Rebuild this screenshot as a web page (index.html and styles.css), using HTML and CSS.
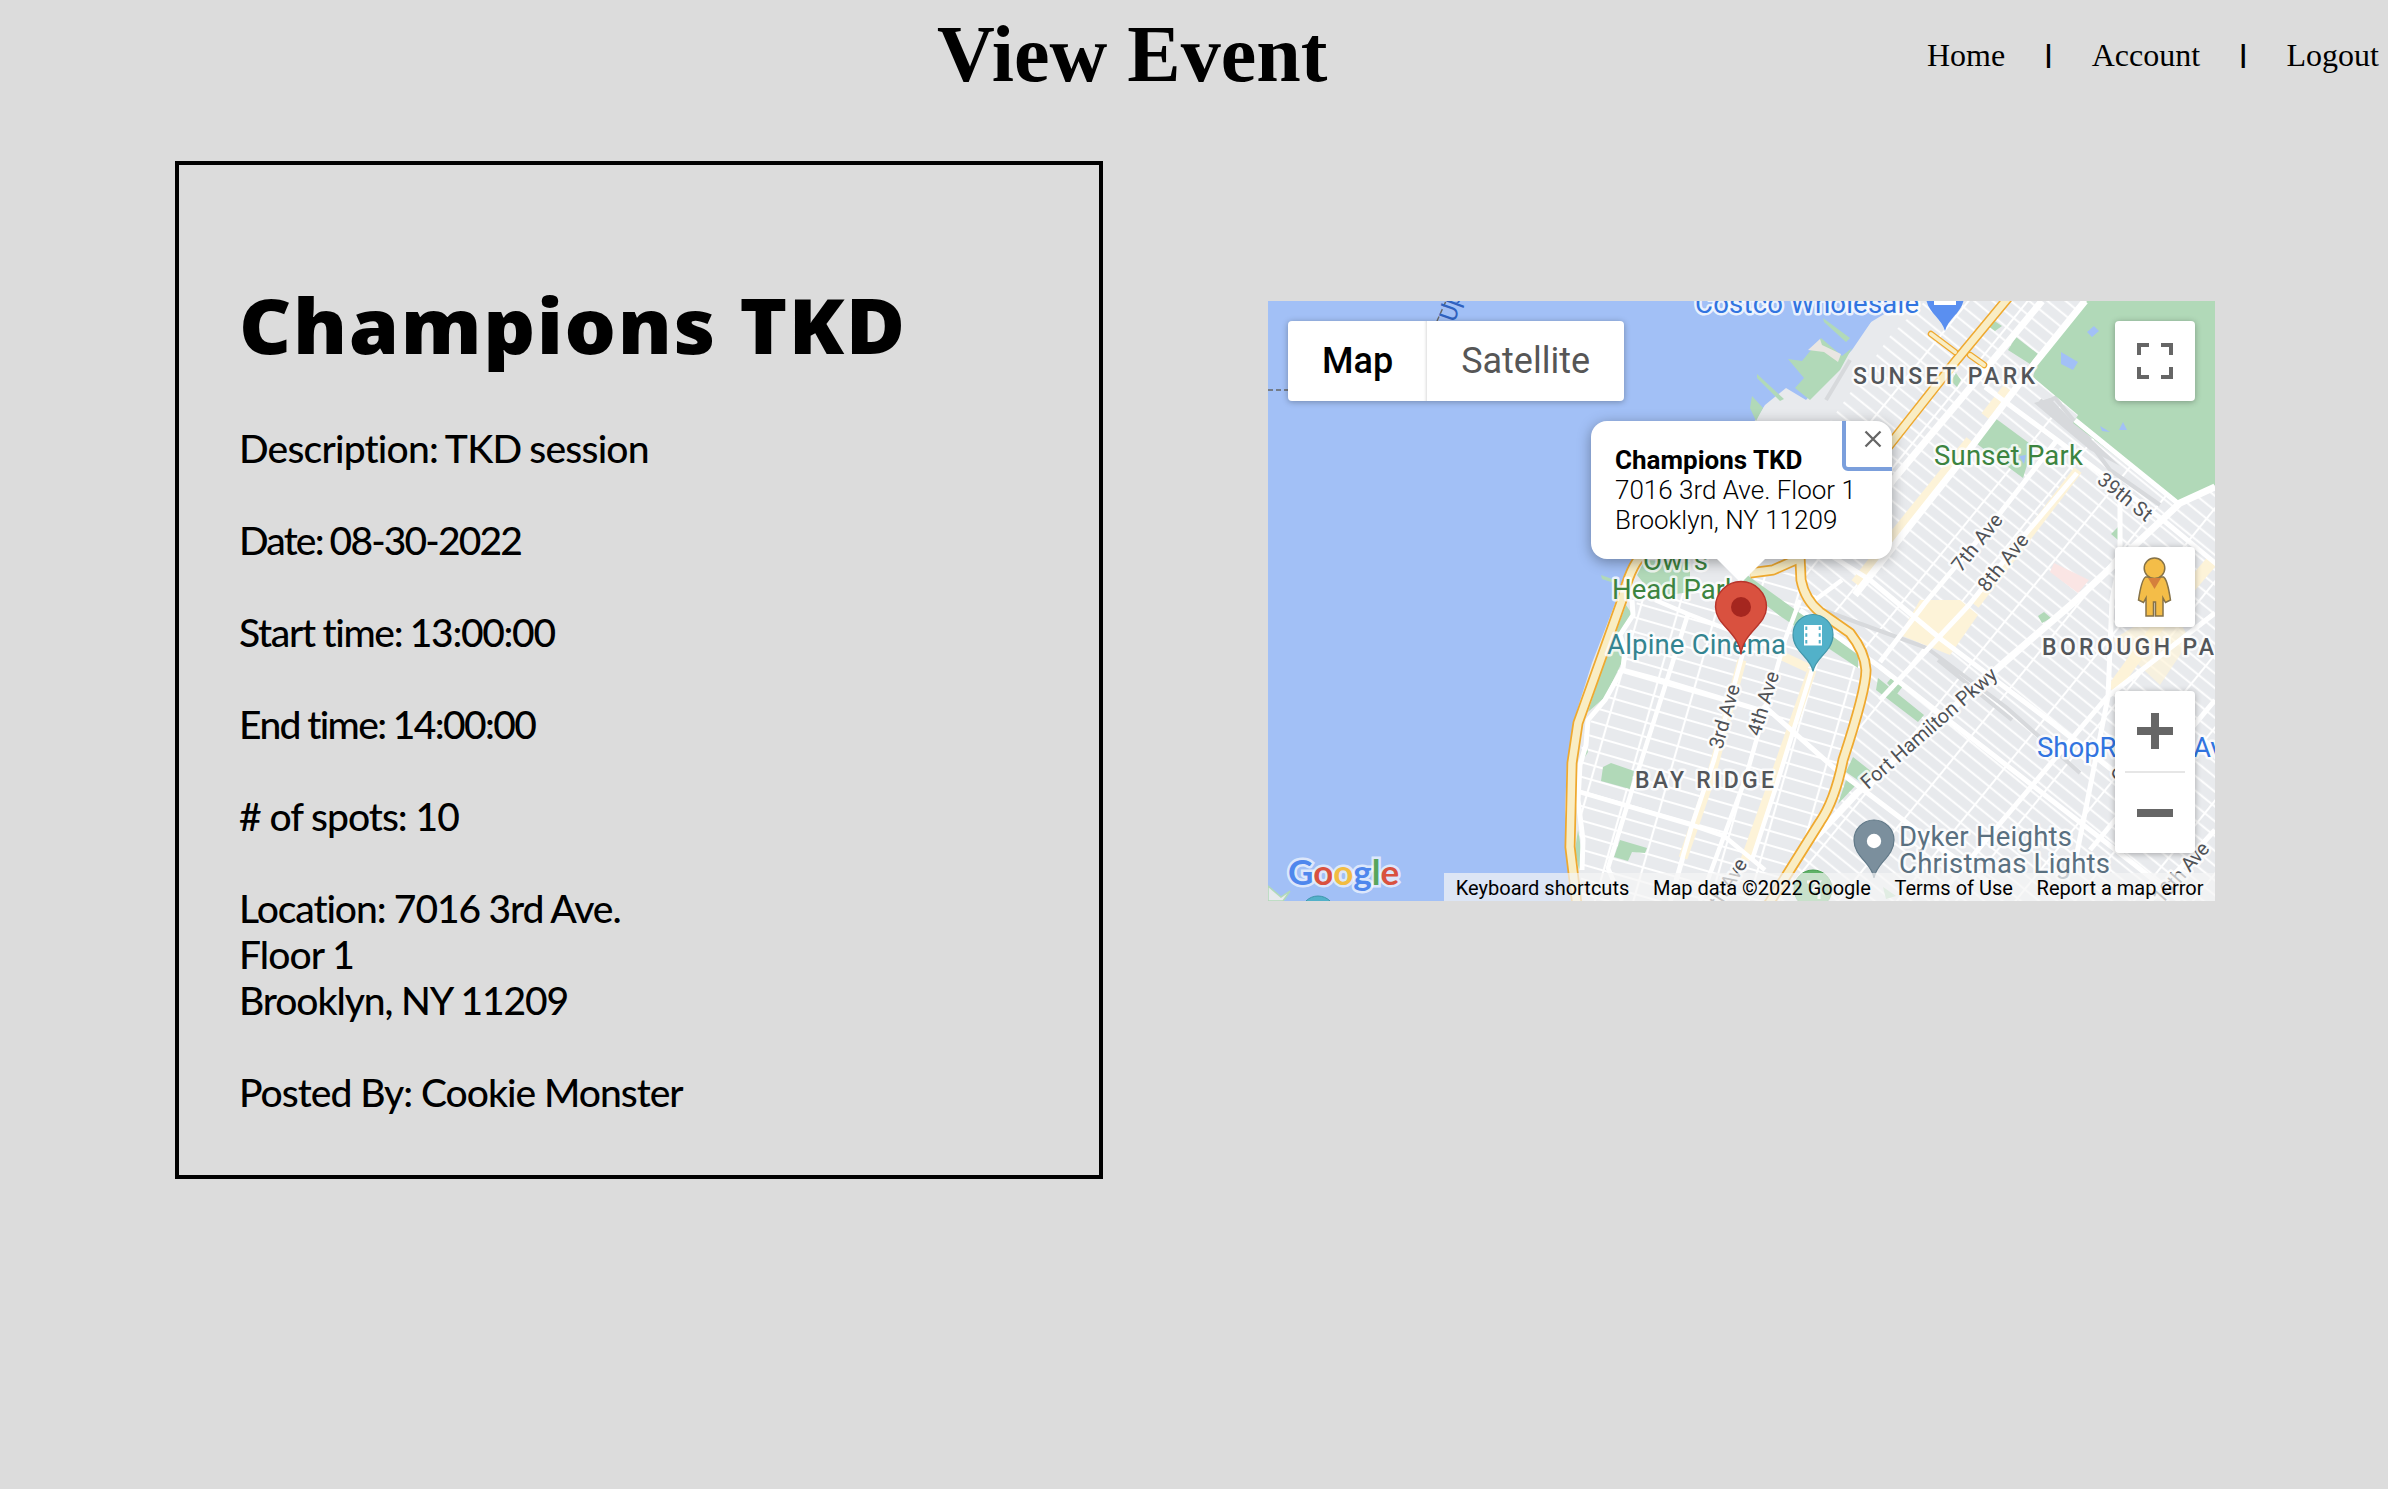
FILE: index.html
```html
<!DOCTYPE html>
<html lang="en">
<head>
<meta charset="utf-8">
<title>View Event</title>
<link rel="stylesheet" href="styles.css">
</head>
<body>
<header class="topbar">
  <h1 class="page-title">View Event</h1>
  <nav class="nav">
    <a class="nav-link">Home</a><span class="nav-sep">I</span><a class="nav-link">Account</a><span class="nav-sep">I</span><a class="nav-link">Logout</a>
  </nav>
</header>
<main class="content">
  <section class="card">
    <h2 class="event-name"><span>Champions TKD</span></h2>
    <p class="line"><span class="t-desc">Description: TKD session</span></p>
    <p class="line"><span class="t-date">Date: 08-30-2022</span></p>
    <p class="line"><span class="t-start">Start time: 13:00:00</span></p>
    <p class="line"><span class="t-end">End time: 14:00:00</span></p>
    <p class="line"><span class="t-spots"># of spots: 10</span></p>
    <p class="line"><span class="t-loc">Location: 7016 3rd Ave.</span><br><span class="t-floor">Floor 1</span><br><span class="t-city">Brooklyn, NY 11209</span></p>
    <p class="line"><span class="t-by">Posted By: Cookie Monster</span></p>
  </section>
  <section class="map">
    <svg class="map-canvas" viewBox="1268 301 947 600" width="947" height="600">
      <defs>
        <pattern id="gridEast" width="46" height="11.5" patternUnits="userSpaceOnUse" patternTransform="translate(1900 500) rotate(39)">
          <path d="M0 5.5H46M20 0V11.5" stroke="#fff" stroke-width="2" fill="none"/>
        </pattern>
        <pattern id="gridBay" width="37" height="14" patternUnits="userSpaceOnUse" patternTransform="translate(1640 700) rotate(16)">
          <path d="M0 6H37M12 0V14" stroke="#fff" stroke-width="2.1" fill="none"/>
        </pattern>
        <path id="land" d="M1906 301L1871 322 1852 350 1832 372 1806 400 1786 388 1765 405 1752 425 1700 480 1640 553 1630 570 1616 601 1592 663 1574 720 1567 763 1565 810 1568 850 1574 901H2215V301Z"/>
        <clipPath id="landClip"><use href="#land"/></clipPath>
      </defs>
      <rect x="1268" y="301" width="947" height="600" fill="#a2c0f6"/>
      <path d="M1268 886L1281 897 1290 891 1283 901H1268Z" fill="#e8eaed" stroke="#b1d9b8" stroke-width="1.5"/>
      <path d="M1268 390H1290M1437 321L1446 301" stroke="#666" stroke-width="1.4" stroke-dasharray="5 3" fill="none"/>
      <use href="#land" fill="#e8eaed"/>
      <g clip-path="url(#landClip)">
        <path d="M1890 336L1925 301H2215V901H1770L1818 825 1866 675 1800 570 1810 450Z" fill="url(#gridEast)"/>
        <path d="M1640 590L1690 590 1800 570 1866 675 1818 825 1770 901H1582L1578 800 1582 740 1625 650Z" fill="url(#gridBay)"/>
        <g stroke="#fdf3d8" stroke-width="9" fill="none">
          <path d="M2007 388L1985 416M1970 440L1855 583M2078 470L1975 605M1742 660L1710 780 1683 858M1812 670L1770 790 1745 860M1780 655L1808 668"/>
          <path d="M2213 560L2170 610 2112 690" stroke-width="12"/>
        </g>
        <path d="M1920 600L1960 600 1978 615 1950 655 1900 635Z" fill="#fdf3d8"/>
        <path d="M2112 640L2170 605 2190 640 2160 685Z" fill="#fdf3d8" opacity=".7"/>
        <path d="M2054 563L2089 580 2078 593 2050 572Z" fill="#fae5e4"/>
        <path d="M1823 610L1927 648 2007 708 2080 773M1938 660L2012 720M2040 400L2080 430 2110 470 2160 505M2040 405L2055 398 2090 440M1826 400L1850 360" stroke="#d7d9dc" stroke-width="4" fill="none"/>
        <path d="M2034 403L2050 398 2076 425 2120 466 2090 450Z" fill="#d7d9dc"/>
      </g>
      <g fill="#b1d9b8">
        <path d="M2087 301H2215V485L2179 505 2073 423 2078 415 2033 377 2037 363Z"/>
        <path d="M1995 418L2033 446 2023 478 1977 444Z"/>
        <path d="M2016 337L2038 354 2030 364 2008 350ZM1993 320L2002 326 1995 331 1988 326ZM1956 373L1961 380 1957 387 1951 381Z"/>
        <path d="M1821 338L1842 356 1852 348 1840 370 1810 400 1795 388 1804 378 1788 359 1802 361ZM1752 396L1763 408 1756 421 1750 408ZM1757 374L1784 399 1780 401 1757 378ZM1823 318L1850 338 1846 342 1824 322Z"/>
        <path d="M1645 560L1690 562 1690 592 1655 597 1637 575Z"/>
        <path d="M1626 605L1632 614 1622 628 1623 660 1605 697 1588 712 1600 675ZM1585 740L1588 752 1580 765ZM1611 763L1634 771 1630 789 1601 781 1603 767ZM1620 840L1647 848 1645 853 1632 852 1628 861 1614 857ZM1578 830L1583 860 1579 870 1575 850Z"/>
        <path d="M1747 575L1790 606 1822 628 1858 655 1858 668 1825 646 1780 616 1740 585Z"/>
        <path d="M1878 678L1924 715 1918 722 1876 690ZM1893 676L1903 686 1897 694 1887 683ZM1853 757L1872 772 1865 785 1846 772ZM1846 780L1855 786 1838 804Z"/>
        <path d="M2044 612L2051 618 2042 623 2038 616ZM2111 534L2118 527V540ZM1883 887L1896 896 1886 899Z"/>
        <path d="M1601 575L1618 581 1617 584 1602 579Z"/>
      </g>
      <path d="M1808 350L1820 339 1822 345 1841 354 1838 362 1824 352Z" fill="#e9e6e2"/>
      <path d="M1857 324L1868 314 1873 319 1864 331Z" fill="#a2c0f6"/>
      <path d="M2061 352L2078 362 2073 370 2061 364ZM2087 332L2094 326 2099 331 2092 337ZM2100 426L2110 432 2102 431ZM2119 430L2123 422 2127 430ZM2019 456L2026 455 2024 464Z" fill="#a2c0f6"/>
      <g clip-path="url(#landClip)" stroke="#fff" fill="none" stroke-linejoin="round">
        <path stroke-width="7" d="M2042 301L1960 400 1893 480 1846 550M2085 301L2035 363 1960 462 1855 595M2215 487L2180 503 2073 603 2007 660 1857 793 1813 840"/>
        <path stroke-width="5" d="M1985 387L2057 440 2163 520 2220 567M2057 440L1997 517 1925 603 1880 662M2077 473L2023 537 1969 605 1880 700M2120 493V560L2112 600 2108 697 2073 873M1830 555L1870 580 1942 640 2055 725 2150 800M1800 610L1880 667 2135 865 2180 901M1763 705L1833 767 1927 838 2000 890M2215 613L2107 697 1997 827 1935 901M2215 700L2090 850M2215 830L2150 901M2075 420L2180 505"/>
        <path stroke-width="5" d="M1632 600L1633 615 1620 635 1625 650 1623 668 1605 700 1588 720 1586 745 1580 765 1578 800 1583 840 1582 870"/>
        <path stroke-width="4.5" d="M1655 600L1688 614 1780 650M1623 670L1668 682 1760 710M1580 792L1692 825 1724 836 1765 870M1688 614L1667 680 1632 790 1608 868 1622 901M1745 645L1714 760 1692 825 1670 901M1812 670L1775 790 1752 860M1800 600L1785 640 1745 780 1724 836 1700 901M1842 580L1815 600"/>
      </g>
      <path fill="none" stroke="#efa92f" stroke-width="10" d="M2008 298L1955 362 1880 457"/>
      <path fill="none" stroke="#efa92f" stroke-width="6.500" d="M1931 334L1955 352M1970 355L1984 365" stroke-linecap="round"/>
      <path fill="none" stroke="#efa92f" stroke-width="11" stroke-linejoin="round" d="M1642 555Q1630 567 1622 600L1578 723 1572 763 1570 847 1577 905M1750 573L1773 570 1800 558 1801 580Q1805 600 1820 612L1850 633Q1865 652 1866 670Q1866 690 1843 760Q1835 800 1820 822L1768 905"/>
      <path fill="none" stroke="#f9edc4" stroke-width="7" d="M2008 298L1955 362 1880 457"/>
      <path fill="none" stroke="#f9edc4" stroke-width="4" stroke-linecap="round" d="M1931 334L1955 352M1970 355L1984 365"/>
      <path fill="none" stroke="#f9edc4" stroke-width="7.5" stroke-linejoin="round" d="M1642 555Q1630 567 1622 600L1578 723 1572 763 1570 847 1577 905M1750 573L1773 570 1800 558 1801 580Q1805 600 1820 612L1850 633Q1865 652 1866 670Q1866 690 1843 760Q1835 800 1820 822L1768 905"/>

      <g class="lbl">
        <text class="poi blue" x="1695" y="313" textLength="224">Costco Wholesale</text>
        <text class="poi green" x="1934" y="464.500" textLength="149">Sunset Park</text>
        <text class="poi green" x="1643" y="570" textLength="65">Owl's</text>
        <text class="poi green" x="1612" y="599" textLength="127">Head Park</text>
        <text class="poi teal" x="1607" y="654" textLength="179">Alpine Cinema</text>
        <text class="poi blue" x="2037" y="757">ShopR</text>
        <text class="poi blue" x="2193" y="757">Av</text>
        <text class="poi slate" x="1899" y="846" textLength="173">Dyker Heights</text>
        <text class="poi slate" x="1899" y="873" textLength="211">Christmas Lights</text>
        <text class="hood" x="1853" y="384" textLength="182">SUNSET PARK</text>
        <text class="hood" x="1635" y="788" textLength="139">BAY RIDGE</text>
        <text class="hood" x="2042" y="655" textLength="172">BOROUGH PA</text>
        <g class="street">
          <text transform="translate(2096 482) rotate(39)" textLength="64">39th St</text>
          <text transform="translate(1961 573) rotate(-51)" textLength="68">7th Ave</text>
          <text transform="translate(1987 593) rotate(-51)" textLength="68">8th Ave</text>
          <text transform="translate(1722 750) rotate(-74)" textLength="66">3rd Ave</text>
          <text transform="translate(1760 737) rotate(-73)" textLength="66">4th Ave</text>
          <text transform="translate(1868 790) rotate(-41)" textLength="173">Fort Hamilton Pkwy</text>
          <text transform="translate(2162 905) rotate(-49)" textLength="74">10th Ave</text>
          <text transform="translate(1714 918) rotate(-58)" textLength="64">5th Ave</text>
          <text transform="translate(2122 784) rotate(-60)">C</text>
        </g>
        <text class="water" transform="translate(1456 322) rotate(-80)">Up</text>
      </g>

      <path d="M1945 331C1942 318 1926 312 1926 296H1964C1964 312 1948 318 1945 331Z" fill="#5a8ff0"/>
      <path d="M1934 299H1956V305H1934Z" fill="#fff"/>
      <circle cx="1318" cy="913" r="17" fill="#52b1c9" stroke="#3f96ab"/>
      <circle cx="1813" cy="889" r="19" fill="#5fb268" stroke="#449b4e"/>
      <path d="M1807 882H1819L1813 890H1819V899" stroke="#fff" stroke-width="3" fill="none"/>
      <path d="M1813 671.500C1811 657 1793 652 1793 634.500A20 20 0 0 1 1833 634.500C1833 652 1815 657 1813 671.500Z" fill="#52b1c9" stroke="#4297aa" stroke-width="1.200"/>
      <path d="M1804 625H1822V645.500H1804Z" fill="#fff"/>
      <path d="M1806.300 626.500V645M1819.700 626.500V645" stroke="#52b1c9" stroke-width="2" stroke-dasharray="3.500 3.200" fill="none"/>
      <path d="M1874 878C1872 863 1854 857 1854 840A20 20 0 0 1 1894 840C1894 857 1876 863 1874 878Z" fill="#7b8f9d" stroke="#617988" stroke-width="1.200"/>
      <circle cx="1874" cy="841" r="7.200" fill="#fff"/>
    </svg>

    <div class="bubble">
      <b>Champions TKD</b><br>7016 3rd Ave. Floor 1<br>Brooklyn, NY 11209
      <span class="close"><svg width="18" height="18" viewBox="0 0 18 18"><path d="M1.500 1.500L16.500 16.500M16.500 1.500L1.500 16.500" stroke="#666" stroke-width="2.300"/></svg></span>
    </div>
    <svg class="tail" width="50" height="25" viewBox="0 0 50 25"><path d="M0 0H50L25 25Z" fill="#fff"/></svg>
    <svg class="marker" width="54" height="76" viewBox="0 0 54 76"><path d="M27 74.500C25 52 1.500 45 1.500 27A25.500 25.500 0 0 1 52.500 27C52.500 45 29 52 27 74.500Z" fill="#d9513f" stroke="#b7342a" stroke-width="1.400"/><circle cx="27" cy="27" r="10" fill="#a5261f"/></svg>

    <div class="types"><span class="type type-on">Map</span><span class="type">Satellite</span></div>
    <div class="ctl full"><svg width="36" height="36" viewBox="0 0 36 36"><path d="M2 12V2H12M24 2H34V12M34 24V34H24M12 34H2V24" fill="none" stroke="#666" stroke-width="4"/></svg></div>
    <div class="ctl peg"><svg width="36" height="60" viewBox="0 0 36 60"><g fill="#f4bd48" stroke="#857248" stroke-width="1.500"><path d="M8.500 20C5.500 22 3 33 1.500 43L6.500 45.500 9 41V59H16.500V45H18.500V59H26V41L28.500 45.500 33.500 43C32 33 30 22 26.500 20Z"/><circle cx="17.500" cy="11.200" r="10.300"/></g><path d="M11 21H24L17.500 32Z" fill="#d5803c"/></svg></div>
    <div class="ctl zoom">
      <svg width="36" height="36" viewBox="0 0 36 36"><path d="M0 18H36M18 0V36" stroke="#666" stroke-width="8"/></svg>
      <i class="rule"></i>
      <svg width="36" height="36" viewBox="0 0 36 36"><path d="M0 18H36" stroke="#666" stroke-width="8"/></svg>
    </div>
    <div class="logo"><span class="g-blue">G</span><span class="g-red">o</span><span class="g-yellow">o</span><span class="g-blue">g</span><span class="g-green">l</span><span class="g-red">e</span></div>
    <div class="legal"><span>Keyboard shortcuts</span><span>Map data ©2022 Google</span><span>Terms of Use</span><span>Report a map error</span></div>
  </section>
</main>
</body>
</html>
```
FILE: styles.css
```css
* { box-sizing: border-box; }
body { margin: 0; background: #dcdcdc; color: #000; font-family: "Gill Sans", Lato, sans-serif; }
.topbar { display: grid; grid-template-columns: 1fr auto; align-items: start; height: 161px; padding: 0 9px 0 937px; }
.page-title { margin: 8px 0 0; font: bold 80px/92px "Liberation Serif", "Times New Roman", serif; }
.nav { display: flex; gap: 39.75px; margin-top: 37px; font-size: 32px; line-height: 37px; }
.nav-link { font-family: "Liberation Serif", "Times New Roman", serif; }
.nav-sep { width: 7px; display: flex; justify-content: center; }
.content { display: flex; align-items: flex-start; gap: 165px; padding-left: 175px; }
.card { width: 928px; height: 1018px; border: 4px solid #000; padding: 114px 60px 0; }
.event-name { margin: 0 0 54px; font-family: "Gill Sans", "Open Sans", sans-serif; font-weight: 800; font-size: 77px; line-height: 92px; letter-spacing: 1.5px; white-space: nowrap; transform: scaleX(1.05); transform-origin: left; }
.line { margin: 0 0 46px; font-size: 39px; line-height: 46px; font-weight: 500; white-space: nowrap; font-variant-ligatures: none; }
.t-desc { letter-spacing: -.8px; word-spacing: -1px; }
.t-date { letter-spacing: -1.85px; word-spacing: -1px; }
.t-start { letter-spacing: -1.3px; word-spacing: -1px; }
.t-end { letter-spacing: -1.6px; word-spacing: -1px; }
.t-spots { letter-spacing: -1px; }
.t-loc { letter-spacing: -1.1px; word-spacing: -.3px; }
.t-floor { letter-spacing: -.9px; }
.t-city { letter-spacing: -1.1px; }
.t-by { letter-spacing: -1px; }
.map { position: relative; width: 947px; height: 600px; margin-top: 140px; overflow: hidden; font-family: Roboto, sans-serif; }
.map-canvas { display: block; }
.lbl text { paint-order: stroke; stroke: rgba(255,255,255,.8); stroke-width: 5px; stroke-linejoin: round; }
.poi { font-size: 27.500px; }
.blue { fill: #3174e0; }
.green { fill: #3c843f; }
.teal { fill: #348490; }
.slate { fill: #5a7080; }
.hood { font-size: 23px; font-weight: 500; fill: #53565a; }
.street { font-size: 20px; fill: #505256; }
.lbl .water { font-size: 25px; font-style: italic; fill: #2f62c0; stroke: none; }
.bubble { position: absolute; left: 323px; top: 120px; width: 301px; height: 138px; padding: 24px 24px; border-radius: 16px; background: #fff; font-size: 26px; line-height: 30px; font-weight: 300; white-space: nowrap; overflow: hidden; box-shadow: 0 3px 14px rgba(0,0,0,.35); }
.bubble b { font-weight: 700; }
.close { position: absolute; left: 251px; top: -10px; width: 70px; height: 60px; border: 4px solid #7b9fdc; border-radius: 6px; }
.close svg { position: absolute; left: 18px; top: 15px; }
.tail { position: absolute; left: 448px; top: 257px; }
.marker { position: absolute; left: 446px; top: 279px; }
.types { position: absolute; left: 20px; top: 20px; display: flex; height: 80px; border-radius: 4px; background: #fff; box-shadow: 0 1px 6px rgba(0,0,0,.3); font-size: 36px; line-height: 80px; }
.type { padding: 0 34px; color: #565656; }
.type-on { color: #000; font-weight: 500; box-shadow: inset -3px 0 3px -2px rgba(0,0,0,.15); }
.ctl { position: absolute; left: 847px; width: 80px; height: 80px; display: flex; flex-direction: column; align-items: center; justify-content: center; background: #fff; border-radius: 4px; box-shadow: 0 1px 6px rgba(0,0,0,.3); }
.full { top: 20px; }
.peg { top: 246px; }
.zoom { top: 390px; height: 162px; justify-content: space-between; padding: 22px 0; }
.rule { width: 60px; height: 2px; background: #e6e6e6; }
.logo { position: absolute; left: 20px; top: 546px; font: 700 35px/48px Lato, sans-serif; -webkit-text-stroke: 5px rgba(255,255,255,.65); paint-order: stroke fill; }
.g-blue { color: #4f87ed; }
.g-red { color: #d9513f; }
.g-yellow { color: #f2bc42; }
.g-green { color: #58a55c; }
.legal { position: absolute; right: 0; bottom: 0; height: 28px; display: flex; gap: .7px; font-size: 20px; line-height: 30px; background: rgba(245,245,245,.7); white-space: nowrap; }
.legal span { padding: 0 11.500px; }
```
